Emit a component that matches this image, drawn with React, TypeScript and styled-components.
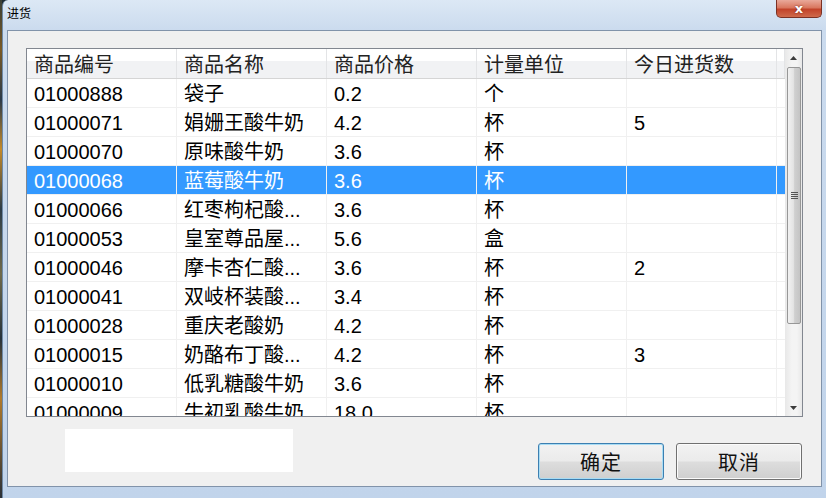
import styled, { createGlobalStyle } from 'styled-components';

const GlobalStyle = createGlobalStyle`
  html, body {
    margin: 0;
    padding: 0;
    background: #1d2a33;
  }
`;

const FONT = `"Liberation Sans", "Noto Sans CJK SC", sans-serif`;

const Desktop = styled.div`
  display: flex;
  width: 826px;
  height: 498px;
  overflow: hidden;
  font-family: ${FONT};
`;

const DesktopStrip = styled.div`
  width: 3px;
  background: linear-gradient(
    180deg,
    #3a3f36 0%,
    #7a5a26 10%,
    #2a3a4a 20%,
    #c48a2a 30%,
    #2c3c48 42%,
    #6f6a4c 55%,
    #26323c 68%,
    #b07a2c 80%,
    #2a3038 100%
  );
`;

const Window = styled.div`
  flex: 1;
  display: flex;
  flex-direction: column;
  border-top-left-radius: 6px;
  border-left: 1px solid #6f8aa8;
  background: linear-gradient(180deg, #dce8f5 0px, #cbdbee 30px, #c1d4eb 100%);
`;

const TitleBar = styled.div`
  height: 30px;
  display: flex;
  align-items: flex-start;
  padding-left: 4px;
`;

const Title = styled.div`
  padding-top: 4px;
  font-size: 12px;
  color: #000;
`;

const CloseButton = styled.div`
  margin-left: auto;
  margin-right: 4px;
  width: 46px;
  height: 18px;
  box-sizing: border-box;
  border: 1px solid #7b3124;
  border-top: none;
  border-radius: 0 0 5px 5px;
  background: linear-gradient(180deg, #e9a99a 0%, #d9775f 45%, #c2432a 55%, #cf6a4c 100%);
  display: flex;
  align-items: center;
  justify-content: center;
  color: #fff;
  font-family: "DejaVu Sans", sans-serif;
  font-weight: bold;
  font-size: 13px;
  line-height: 1;
  text-shadow: 0 0 2px #6a1c10;
`;

const ClientArea = styled.div`
  flex: 1;
  margin: 0 4px 11px 4px;
  border: 1px solid #8193aa;
  background: #f0f0f0;
  display: flex;
  flex-direction: column;
  padding: 17px 18px 0 18px;
`;

const TableBox = styled.div`
  height: 369px;
  box-sizing: border-box;
  border: 1px solid #828790;
  background: #fff;
  display: flex;
  overflow: hidden;
`;

const GridArea = styled.div`
  flex: 1;
  display: flex;
  flex-direction: column;
  overflow: hidden;
`;

const HeaderRow = styled.div`
  display: grid;
  grid-template-columns: repeat(5, 150px) 1fr;
  height: 30px;
  box-sizing: border-box;
  border-bottom: 1px solid #d5d5d5;
  background: linear-gradient(180deg, #ffffff 0%, #ffffff 42%, #f1f2f4 42%, #f1f2f4 100%);
  flex-shrink: 0;
`;

const HeaderCell = styled.div`
  padding: 3px 0 0 7px;
  border-right: 1px solid #e3e4e6;
  font-size: 20px;
  line-height: 26px;
  color: #222;
  white-space: nowrap;
  overflow: hidden;
`;

const Row = styled.div<{ $selected?: boolean }>`
  display: grid;
  grid-template-columns: repeat(5, 150px);
  height: 29px;
  box-sizing: border-box;
  border-bottom: 1px solid #f0f0f0;
  flex-shrink: 0;
  background: ${(p) => (p.$selected ? '#3399ff' : '#fff')};
  color: ${(p) => (p.$selected ? '#fff' : '#000')};
`;

const Cell = styled.div`
  padding-left: 7px;
  border-right: 1px solid #f0f0f0;
  font-size: 20px;
  line-height: 30px;
  white-space: nowrap;
  overflow: hidden;
`;

const Scrollbar = styled.div`
  width: 17px;
  display: flex;
  flex-direction: column;
  background: linear-gradient(90deg, #e8e8e8, #f4f4f4 40%, #f4f4f4 70%, #e8e8e8);
`;

const ArrowBox = styled.div`
  height: 17px;
  display: flex;
  align-items: center;
  justify-content: center;
`;

const Thumb = styled.div`
  height: 257px;
  margin: 1px 1px 0 2px;
  box-sizing: border-box;
  border: 1px solid #979797;
  border-radius: 2px;
  background: linear-gradient(90deg, #f1f1f1 0%, #e4e4e4 45%, #d0d0d0 55%, #c4c4c4 100%);
  display: flex;
  align-items: center;
  justify-content: center;
`;

const Track = styled.div`
  flex: 1;
`;

const BottomBar = styled.div`
  display: flex;
  align-items: flex-start;
`;

const NoteBox = styled.div`
  margin: 12px 0 0 39px;
  width: 228px;
  height: 43px;
  background: #fff;
`;

const Buttons = styled.div`
  margin-left: auto;
  margin-top: 26px;
  display: flex;
  gap: 12px;
  padding-right: 1px;
`;

const Button = styled.div<{ $focused?: boolean }>`
  width: 126px;
  height: 37px;
  box-sizing: border-box;
  border: 1px solid ${(p) => (p.$focused ? '#3c7fb1' : '#707070')};
  border-radius: 3px;
  box-shadow: ${(p) => (p.$focused ? 'inset 0 0 0 1px #a8dcf4' : 'inset 0 0 0 1px #fbfbfb')};
  background: linear-gradient(180deg, #f2f2f2 0%, #ebebeb 48%, #dddddd 52%, #cfcfcf 100%);
  display: flex;
  align-items: center;
  justify-content: center;
  font-size: 20px;
  color: #111;
  letter-spacing: 1px;
`;

type Product = {
  code: string;
  name: string;
  price: string;
  unit: string;
  count: string;
};

const columns = ['商品编号', '商品名称', '商品价格', '计量单位', '今日进货数'];

const products: Product[] = [
  { code: '01000888', name: '袋子', price: '0.2', unit: '个', count: '' },
  { code: '01000071', name: '娟姗王酸牛奶', price: '4.2', unit: '杯', count: '5' },
  { code: '01000070', name: '原味酸牛奶', price: '3.6', unit: '杯', count: '' },
  { code: '01000068', name: '蓝莓酸牛奶', price: '3.6', unit: '杯', count: '' },
  { code: '01000066', name: '红枣枸杞酸...', price: '3.6', unit: '杯', count: '' },
  { code: '01000053', name: '皇室尊品屋...', price: '5.6', unit: '盒', count: '' },
  { code: '01000046', name: '摩卡杏仁酸...', price: '3.6', unit: '杯', count: '2' },
  { code: '01000041', name: '双岐杯装酸...', price: '3.4', unit: '杯', count: '' },
  { code: '01000028', name: '重庆老酸奶', price: '4.2', unit: '杯', count: '' },
  { code: '01000015', name: '奶酪布丁酸...', price: '4.2', unit: '杯', count: '3' },
  { code: '01000010', name: '低乳糖酸牛奶', price: '3.6', unit: '杯', count: '' },
  { code: '01000009', name: '牛初乳酸牛奶', price: '18.0', unit: '杯', count: '' },
];

const SELECTED = '01000068';

const UpArrow = () => (
  <svg width="7" height="4" viewBox="0 0 7 4">
    <path d="M0 4 L3.5 0 L7 4 Z" fill="#3c3c3c" />
  </svg>
);

const DownArrow = () => (
  <svg width="7" height="4" viewBox="0 0 7 4">
    <path d="M0 0 L3.5 4 L7 0 Z" fill="#3c3c3c" />
  </svg>
);

const Grip = () => (
  <svg width="7" height="8" viewBox="0 0 7 8">
    {[0, 2, 4, 6].map((y) => (
      <rect key={y} x="0" y={y} width="7" height="1" fill="#555" />
    ))}
  </svg>
);

const App = () => {
  return (
    <Desktop>
      <GlobalStyle />
      <DesktopStrip />
      <Window>
        <TitleBar>
          <Title>进货</Title>
          <CloseButton>x</CloseButton>
        </TitleBar>
        <ClientArea>
          <TableBox>
            <GridArea>
              <HeaderRow>
                {columns.map((c) => (
                  <HeaderCell key={c}>{c}</HeaderCell>
                ))}
                <HeaderCell />
              </HeaderRow>
              {products.map((p) => (
                <Row key={p.code} $selected={p.code === SELECTED}>
                  <Cell>{p.code}</Cell>
                  <Cell>{p.name}</Cell>
                  <Cell>{p.price}</Cell>
                  <Cell>{p.unit}</Cell>
                  <Cell>{p.count}</Cell>
                </Row>
              ))}
            </GridArea>
            <Scrollbar>
              <ArrowBox>
                <UpArrow />
              </ArrowBox>
              <Thumb>
                <Grip />
              </Thumb>
              <Track />
              <ArrowBox>
                <DownArrow />
              </ArrowBox>
            </Scrollbar>
          </TableBox>
          <BottomBar>
            <NoteBox />
            <Buttons>
              <Button $focused>确定</Button>
              <Button>取消</Button>
            </Buttons>
          </BottomBar>
        </ClientArea>
      </Window>
    </Desktop>
  );
};

export default App;
